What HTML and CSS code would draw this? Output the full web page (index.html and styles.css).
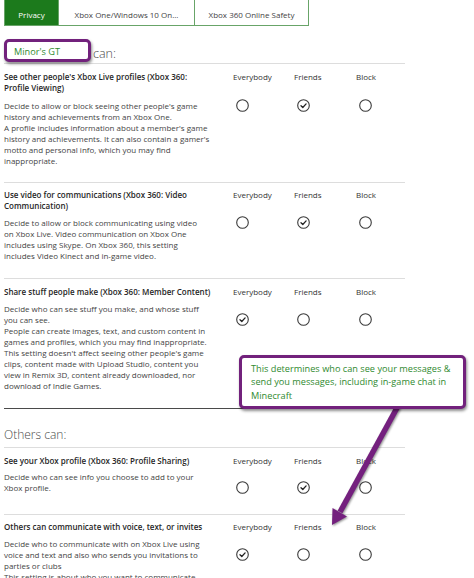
FILE: index.html
```html
<!DOCTYPE html>
<html lang="en">
<head>
<meta charset="utf-8">
<title>Privacy settings</title>
<link rel="stylesheet" href="styles.css">
</head>
<body>
<div class="page">
  <div class="tabs">
    <div class="tab tab-active">Privacy</div>
    <div class="tab tab-two">Xbox One/Windows 10 On...</div>
    <div class="tab tab-three">Xbox 360 Online Safety</div>
  </div>

  <div class="section-head head-first">
    <span class="gt-box">Minor's GT</span>
    <span class="can">can:</span>
  </div>

  <div class="setting row-1">
    <div class="title">See other people's Xbox Live profiles (Xbox 360:<br>Profile Viewing)</div>
    <div class="col-h">Everybody</div>
    <div class="col-h">Friends</div>
    <div class="col-h">Block</div>
    <div class="desc">Decide to allow or block seeing other people's game<br>history and achievements from an Xbox One.<br>A profile includes information about a member's game<br>history and achievements. It can also contain a gamer's<br>motto and personal info, which you may find<br>inappropriate.</div>
    <div class="opt"><svg class="radio" viewBox="0 0 13 13"><circle cx="6.5" cy="6.5" r="5.8"/></svg></div>
    <div class="opt"><svg class="radio" viewBox="0 0 13 13"><circle cx="6.5" cy="6.5" r="5.8"/><path d="M4 6.8 L5.8 8.5 L9.1 4.9"/></svg></div>
    <div class="opt"><svg class="radio" viewBox="0 0 13 13"><circle cx="6.5" cy="6.5" r="5.8"/></svg></div>
  </div>

  <div class="setting row-2">
    <div class="title">Use video for communications (Xbox 360: Video<br>Communication)</div>
    <div class="col-h">Everybody</div>
    <div class="col-h">Friends</div>
    <div class="col-h">Block</div>
    <div class="desc">Decide to allow or block communicating using video<br>on Xbox Live. Video communication on Xbox One<br>includes using Skype. On Xbox 360, this setting<br>includes Video Kinect and in-game video.</div>
    <div class="opt"><svg class="radio" viewBox="0 0 13 13"><circle cx="6.5" cy="6.5" r="5.8"/></svg></div>
    <div class="opt"><svg class="radio" viewBox="0 0 13 13"><circle cx="6.5" cy="6.5" r="5.8"/><path d="M4 6.8 L5.8 8.5 L9.1 4.9"/></svg></div>
    <div class="opt"><svg class="radio" viewBox="0 0 13 13"><circle cx="6.5" cy="6.5" r="5.8"/></svg></div>
  </div>

  <div class="setting row-3 setting-last">
    <div class="title">Share stuff people make (Xbox 360: Member Content)</div>
    <div class="col-h">Everybody</div>
    <div class="col-h">Friends</div>
    <div class="col-h">Block</div>
    <div class="desc">Decide who can see stuff you make, and whose stuff<br>you can see.<br>People can create images, text, and custom content in<br>games and profiles, which you may find inappropriate.<br>This setting doesn't affect seeing other people's game<br>clips, content made with Upload Studio, content you<br>view in Remix 3D, content already downloaded, nor<br>download of Indie Games.</div>
    <div class="opt opt-low"><svg class="radio" viewBox="0 0 13 13"><circle cx="6.5" cy="6.5" r="5.8"/><path d="M4 6.8 L5.8 8.5 L9.1 4.9"/></svg></div>
    <div class="opt opt-low"><svg class="radio" viewBox="0 0 13 13"><circle cx="6.5" cy="6.5" r="5.8"/></svg></div>
    <div class="opt opt-low"><svg class="radio" viewBox="0 0 13 13"><circle cx="6.5" cy="6.5" r="5.8"/></svg></div>
  </div>

  <div class="section-head head-second">
    <span class="others">Others can:</span>
  </div>

  <div class="setting row-4">
    <div class="title">See your Xbox profile (Xbox 360: Profile Sharing)</div>
    <div class="col-h">Everybody</div>
    <div class="col-h">Friends</div>
    <div class="col-h">Block</div>
    <div class="desc">Decide who can see info you choose to add to your<br>Xbox profile.</div>
    <div class="opt opt-low"><svg class="radio" viewBox="0 0 13 13"><circle cx="6.5" cy="6.5" r="5.8"/></svg></div>
    <div class="opt opt-low"><svg class="radio" viewBox="0 0 13 13"><circle cx="6.5" cy="6.5" r="5.8"/><path d="M4 6.8 L5.8 8.5 L9.1 4.9"/></svg></div>
    <div class="opt opt-low"><svg class="radio" viewBox="0 0 13 13"><circle cx="6.5" cy="6.5" r="5.8"/></svg></div>
  </div>

  <div class="setting row-5">
    <div class="title">Others can communicate with voice, text, or invites</div>
    <div class="col-h">Everybody</div>
    <div class="col-h">Friends</div>
    <div class="col-h">Block</div>
    <div class="desc">Decide who to communicate with on Xbox Live using<br>voice and text and also who sends you invitations to<br>parties or clubs<br>This setting is about who you want to communicate</div>
    <div class="opt opt-low"><svg class="radio" viewBox="0 0 13 13"><circle cx="6.5" cy="6.5" r="5.8"/><path d="M4 6.8 L5.8 8.5 L9.1 4.9"/></svg></div>
    <div class="opt opt-low"><svg class="radio" viewBox="0 0 13 13"><circle cx="6.5" cy="6.5" r="5.8"/></svg></div>
    <div class="opt opt-low"><svg class="radio" viewBox="0 0 13 13"><circle cx="6.5" cy="6.5" r="5.8"/></svg></div>
  </div>

  <svg class="arrow" viewBox="0 0 474 578" width="474" height="578">
    <line x1="398" y1="406" x2="340" y2="512"/>
    <polygon points="332,525 347,516.5 332.5,508"/>
  </svg>

  <div class="callout">This determines who can see your messages &amp;<br>send you messages, including in-game chat in<br>Minecraft</div>
</div>
</body>
</html>
```

FILE: styles.css
```css
html, body {
  margin: 0;
  padding: 0;
  background: #ffffff;
}

body {
  font-family: "Open Sans", "Noto Sans", "Liberation Sans", sans-serif;
  color: #333333;
  width: 474px;
  height: 578px;
  overflow: hidden;
}

.page {
  position: relative;
  padding: 0 69px 0 4px;
  width: 401px;
  height: 578px;
  overflow: hidden;
}

/* Tabs */
.tabs {
  display: flex;
  width: 305px;
  height: 26px;
  box-sizing: border-box;
  border: 1px solid #68a468;
  border-top: none;
}

.tab {
  display: flex;
  align-items: center;
  justify-content: center;
  padding-top: 3px;
  box-sizing: border-box;
  font-size: 8px;
  color: #444444;
}

.tab-active {
  width: 53px;
  background: #1c7a1c;
  color: #ffffff;
}

.tab-two {
  width: 136px;
  border-left: 1px solid #68a468;
}

.tab-three {
  flex: 1;
  border-left: 1px solid #68a468;
}

/* Section headings */
.section-head {
  display: flex;
  align-items: center;
  border-bottom: 1px solid #dddddd;
}

.head-first {
  padding-top: 13px;
  padding-bottom: 1px;
}

.gt-box {
  display: flex;
  align-items: center;
  box-sizing: border-box;
  width: 87px;
  height: 23px;
  padding: 1px 0 0 7px;
  border: 3px solid #72217c;
  border-radius: 5px;
  box-shadow: 1px 2px 3px rgba(0, 0, 0, 0.45);
  font-size: 9.2px;
  color: #2f8a2f;
  background: #ffffff;
}

.can {
  margin-left: 2px;
  padding-top: 5px;
  font-size: 12.5px;
  font-weight: 300;
  color: #4a4a4a;
}

.head-second {
  padding-top: 18px;
  padding-bottom: 4px;
}

.others {
  font-size: 12px;
  line-height: 16px;
  font-weight: 300;
  color: #4a4a4a;
}

/* Setting rows */
.setting {
  display: grid;
  grid-template-columns: 229px 61px 62px 49px;
  row-gap: 6px;
  border-bottom: 1px solid #dddddd;
  font-size: 8px;
  line-height: 11px;
}

.setting-last {
  border-bottom-color: #4a4a4a;
}

.row-1 { padding: 7px 0 16px; row-gap: 7px; }
.row-2 { padding: 6px 0 17px; }
.row-3 { padding: 7px 0 17px; }
.row-4 { padding: 7px 0 21px; row-gap: 5px; }
.row-5 { padding: 6px 0 0; border-bottom: none; }

.title {
  font-weight: 600;
  color: #262626;
  white-space: nowrap;
}

.col-h {
  color: #333333;
  white-space: nowrap;
}

.desc {
  color: #444444;
  white-space: nowrap;
}

.opt {
  display: flex;
  align-items: center;
  height: 11px;
  padding-left: 3px;
}

.opt-low {
  margin-top: 11px;
}

.radio {
  width: 13px;
  height: 13px;
  flex: none;
}

.radio circle {
  fill: #ffffff;
  stroke: #3a3a3a;
  stroke-width: 1.1;
}

.radio path {
  fill: none;
  stroke: #222222;
  stroke-width: 1.3;
  stroke-linecap: round;
  stroke-linejoin: round;
}

/* Annotation overlays */
.arrow {
  position: absolute;
  left: 0;
  top: 0;
  pointer-events: none;
  filter: drop-shadow(1px 1px 1px rgba(0, 0, 0, 0.45));
}

.arrow line {
  stroke: #74207e;
  stroke-width: 5.5;
}

.arrow polygon {
  fill: #74207e;
}

.callout {
  position: absolute;
  left: 239px;
  top: 355px;
  width: 227px;
  height: 54px;
  box-sizing: border-box;
  padding: 4px 4px 0 9px;
  border: 3px solid #72217c;
  border-radius: 5px;
  background: #ffffff;
  box-shadow: 1px 2px 3px rgba(0, 0, 0, 0.45);
  font-size: 9.2px;
  line-height: 13.3px;
  color: #2f8a2f;
  white-space: nowrap;
}
```
